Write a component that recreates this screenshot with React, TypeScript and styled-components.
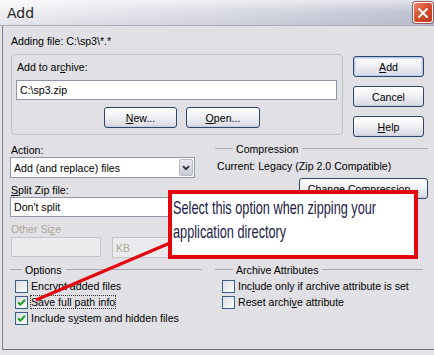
import type { FC, ReactNode } from 'react';
import styled, { createGlobalStyle, css } from 'styled-components';

const GlobalStyle = createGlobalStyle`
  html, body {
    margin: 0;
    padding: 0;
    background: #e4e4e8;
  }
  body {
    font-family: 'Liberation Sans', Arial, sans-serif;
    font-size: 10.6px;
    color: #000;
  }
`;

const Window = styled.div`
  position: relative;
  width: 434px;
  height: 355px;
  overflow: hidden;
`;

const TitleBar = styled.div`
  height: 26px;
  display: flex;
  align-items: center;
  justify-content: space-between;
  padding: 0 1px 0 7px;
  box-sizing: border-box;
  background:
    linear-gradient(to bottom, rgba(255, 255, 255, 0.55), rgba(255, 255, 255, 0) 45%, rgba(120, 124, 150, 0.12)),
    linear-gradient(to right, #f2f2f5, #d9dbe4 55%, #bfc2d2);
  border-bottom: 1px solid #a9abb8;
`;

const Title = styled.span`
  font-family: 'DejaVu Sans', sans-serif;
  font-size: 14px;
  color: #262626;
`;

const CloseButton = styled.div`
  width: 20px;
  height: 21px;
  border-radius: 3px;
  border: 1px solid #fff;
  box-sizing: border-box;
  background: linear-gradient(135deg, #ee8a72, #d8502f 45%, #b8391c);
  box-shadow: 0 0 0 1px #a05a5a;
  display: flex;
  align-items: center;
  justify-content: center;
`;

const Body = styled.div`
  margin-left: 2px;
  height: 324px;
  box-sizing: border-box;
  background: #e1e0e4;
  border-left: 1px solid #7e7e8c;
  border-bottom: 1px solid #6e6e7c;
  padding: 0 0 0 7px;
`;

const TopSection = styled.div`
  display: grid;
  grid-template-columns: 332px 71px;
  column-gap: 10px;
  padding-left: 1px;
`;

const Text = styled.div<{ $disabled?: boolean; $top?: number; $indent?: number }>`
  line-height: 13px;
  height: 13px;
  white-space: nowrap;
  margin-top: ${({ $top = 0 }) => $top}px;
  padding-left: ${({ $indent = 0 }) => $indent}px;
  ${({ $disabled }) =>
    $disabled &&
    css`
      color: #aca899;
    `}
`;

const U = styled.span`
  text-decoration: underline;
`;

const Panel = styled.div`
  margin-top: 6px;
  height: 81px;
  box-sizing: border-box;
  border: 1px solid #c2c2c6;
  border-radius: 4px;
  padding: 6px 5px 0 4px;
`;

const Field = styled.div<{ $width?: number; $disabled?: boolean }>`
  height: 20px;
  width: ${({ $width }) => ($width ? `${$width}px` : 'auto')};
  box-sizing: border-box;
  border: 1px solid #8f97a6;
  background: #fff;
  display: flex;
  align-items: center;
  padding-left: 3px;
  white-space: nowrap;
  overflow: hidden;
  ${({ $disabled }) =>
    $disabled &&
    css`
      background: #ebebee;
      border-color: #c4c4c9;
      color: #aca899;
    `}
`;

const InputGap = styled.div`
  margin-top: 6px;
`;

const ButtonRow = styled.div`
  display: flex;
  gap: 9px;
  margin-top: 7px;
  padding-left: 88px;
`;

const Button = styled.div<{ $width?: number; $default?: boolean }>`
  height: 21px;
  width: ${({ $width = 71 }) => $width}px;
  box-sizing: border-box;
  border: 1px solid #2c466c;
  border-radius: 3px;
  background: linear-gradient(to bottom, #ffffff, #f3f3f6 40%, #dcdde6 90%, #c9cad6);
  display: flex;
  align-items: center;
  justify-content: center;
  white-space: nowrap;
  ${({ $default }) =>
    $default &&
    css`
      box-shadow: inset 0 0 0 1px #b8c8e8, inset 0 0 0 2px #d5e0f4;
    `}
`;

const SideButtons = styled.div`
  display: flex;
  flex-direction: column;
  gap: 9px;
  margin-top: 30px;
`;

const MiddleSection = styled.div`
  display: grid;
  grid-template-columns: 185px 213px;
  column-gap: 20px;
`;

const Column = styled.div`
  display: flex;
  flex-direction: column;
`;

const Combo = styled.div<{ $width?: number; $disabled?: boolean }>`
  height: 21px;
  width: ${({ $width }) => ($width ? `${$width}px` : 'auto')};
  box-sizing: border-box;
  border: 1px solid ${({ $disabled }) => ($disabled ? '#c4c4c9' : '#8f97a6')};
  background: ${({ $disabled }) => ($disabled ? '#ebebee' : '#fff')};
  color: ${({ $disabled }) => ($disabled ? '#aca899' : '#000')};
  display: flex;
  align-items: center;
  justify-content: space-between;
  padding: 1px 1px 1px 3px;
  white-space: nowrap;
`;

const ComboArrow = styled.div`
  width: 14px;
  height: 17px;
  box-sizing: border-box;
  border: 1px solid #b6b9c6;
  border-radius: 2px;
  background: linear-gradient(to bottom, #e9eaf0, #c9cbd8);
  display: flex;
  align-items: center;
  justify-content: center;
`;

const FieldRow = styled.div`
  display: flex;
  gap: 11px;
  margin-top: 1px;
  padding-left: 1px;
`;

const SectionHeader = styled.div<{ $indent: number; $top?: number }>`
  display: flex;
  align-items: center;
  height: 13px;
  margin-top: ${({ $top = 0 }) => $top}px;
  white-space: nowrap;

  &::before {
    content: '';
    width: ${({ $indent }) => $indent - 3}px;
    margin-right: 3px;
    border-top: 1px solid #a8a8b0;
  }

  &::after {
    content: '';
    flex: 1;
    margin-left: 4px;
    border-top: 1px solid #a8a8b0;
  }
`;

const ChangeButtonRow = styled.div`
  margin-top: 5px;
  padding-left: 84px;
`;

const BottomSection = styled.div`
  display: grid;
  grid-template-columns: 192px 208px;
  column-gap: 13px;
  margin-top: 5px;
`;

const CheckList = styled.div<{ $indent: number }>`
  display: flex;
  flex-direction: column;
  margin-top: 2px;
  padding-left: ${({ $indent }) => $indent}px;
`;

const CheckRow = styled.div`
  display: flex;
  align-items: center;
  gap: 3px;
  height: 16px;
  white-space: nowrap;
`;

const Box = styled.div`
  width: 13px;
  height: 13px;
  box-sizing: border-box;
  border: 1px solid #3a5f8a;
  background: linear-gradient(135deg, #dcdde4, #fbfbfc);
  display: flex;
  align-items: center;
  justify-content: center;
`;

const Focus = styled.span`
  outline: 1px dotted #333;
  outline-offset: 0;
`;

const Callout = styled.div`
  position: absolute;
  left: 168px;
  top: 190px;
  width: 250px;
  height: 69px;
  box-sizing: border-box;
  border: 4px solid #e4060c;
  background: #fff;
  padding: 2px 0 0 1px;
  color: #1a1a46;
`;

const CalloutText = styled.div`
  font-family: 'Liberation Sans', sans-serif;
  font-size: 19px;
  line-height: 24px;
  white-space: nowrap;
  transform: scaleX(0.67);
  transform-origin: left center;
`;

const Pointer = styled.svg`
  position: absolute;
  left: 0;
  top: 0;
  pointer-events: none;
`;

const Check: FC<{ checked?: boolean; children: ReactNode }> = ({ checked, children }) => (
  <CheckRow>
    <Box>
      {checked && (
        <svg width="9" height="9" viewBox="0 0 9 9">
          <path d="M1 4.2 L3.4 6.6 L8 1.8" fill="none" stroke="#21a121" strokeWidth="2" />
        </svg>
      )}
    </Box>
    <span>{children}</span>
  </CheckRow>
);

const Chevron = () => (
  <svg width="8" height="6" viewBox="0 0 8 6">
    <path d="M1 1.2 L4 4.2 L7 1.2" fill="none" stroke="#2a2a3a" strokeWidth="1.8" />
  </svg>
);

export default function App() {
  return (
    <>
      <GlobalStyle />
      <Window>
        <TitleBar>
          <Title>Add</Title>
          <CloseButton>
            <svg width="12" height="12" viewBox="0 0 12 12">
              <path d="M2 2 L10 10 M10 2 L2 10" stroke="#fff" strokeWidth="2" strokeLinecap="round" />
            </svg>
          </CloseButton>
        </TitleBar>
        <Body>
          <TopSection>
            <div>
              <Text $top={9}>Adding file: C:\sp3\*.*</Text>
              <Panel>
                <Text $indent={1}>
                  Add to ar<U>c</U>hive:
                </Text>
                <InputGap>
                  <Field>C:\sp3.zip</Field>
                </InputGap>
                <ButtonRow>
                  <Button $width={73}>
                    <U>N</U>ew...
                  </Button>
                  <Button $width={74}>
                    <U>O</U>pen...
                  </Button>
                </ButtonRow>
              </Panel>
            </div>
            <SideButtons>
              <Button $default>
                <U>A</U>dd
              </Button>
              <Button>Cancel</Button>
              <Button>
                <U>H</U>elp
              </Button>
            </SideButtons>
          </TopSection>

          <MiddleSection>
            <Column>
              <Text $top={7} $indent={1}>
                Action:
              </Text>
              <Combo>
                <span>Add (and replace) files</span>
                <ComboArrow>
                  <Chevron />
                </ComboArrow>
              </Combo>
              <Text $top={6} $indent={1}>
                <U>S</U>plit Zip file:
              </Text>
              <Field>Don't split</Field>
              <Text $top={6} $indent={1} $disabled>
                Other Si<U>z</U>e
              </Text>
              <FieldRow>
                <Field $width={90} $disabled />
                <Combo $width={83} $disabled>
                  <span>KB</span>
                </Combo>
              </FieldRow>
            </Column>
            <Column>
              <SectionHeader $indent={21} $top={5}>
                Compression
              </SectionHeader>
              <Text $top={5} $indent={2}>
                Current: Legacy (Zip 2.0 Compatible)
              </Text>
              <ChangeButtonRow>
                <Button $width={129}>Change Compression...</Button>
              </ChangeButtonRow>
            </Column>
          </MiddleSection>

          <BottomSection>
            <div>
              <SectionHeader $indent={15}>Options</SectionHeader>
              <CheckList $indent={5}>
                <Check>Encrypt added files</Check>
                <Check checked>
                  <Focus>Save full path info</Focus>
                </Check>
                <Check checked>
                  Include s<U>y</U>stem and hidden files
                </Check>
              </CheckList>
            </div>
            <div>
              <SectionHeader $indent={21}>Archive Attributes</SectionHeader>
              <CheckList $indent={7}>
                <Check>
                  Inc<U>l</U>ude only if archive attribute is set
                </Check>
                <Check>
                  Reset archi<U>v</U>e attribute
                </Check>
              </CheckList>
            </div>
          </BottomSection>
        </Body>

        <Callout>
          <CalloutText>Select this option when zipping your</CalloutText>
          <CalloutText>application directory</CalloutText>
        </Callout>
        <Pointer width="434" height="355" viewBox="0 0 434 355">
          <line x1="36" y1="300" x2="170" y2="243" stroke="#e4060c" strokeWidth="3" />
        </Pointer>
      </Window>
    </>
  );
}
